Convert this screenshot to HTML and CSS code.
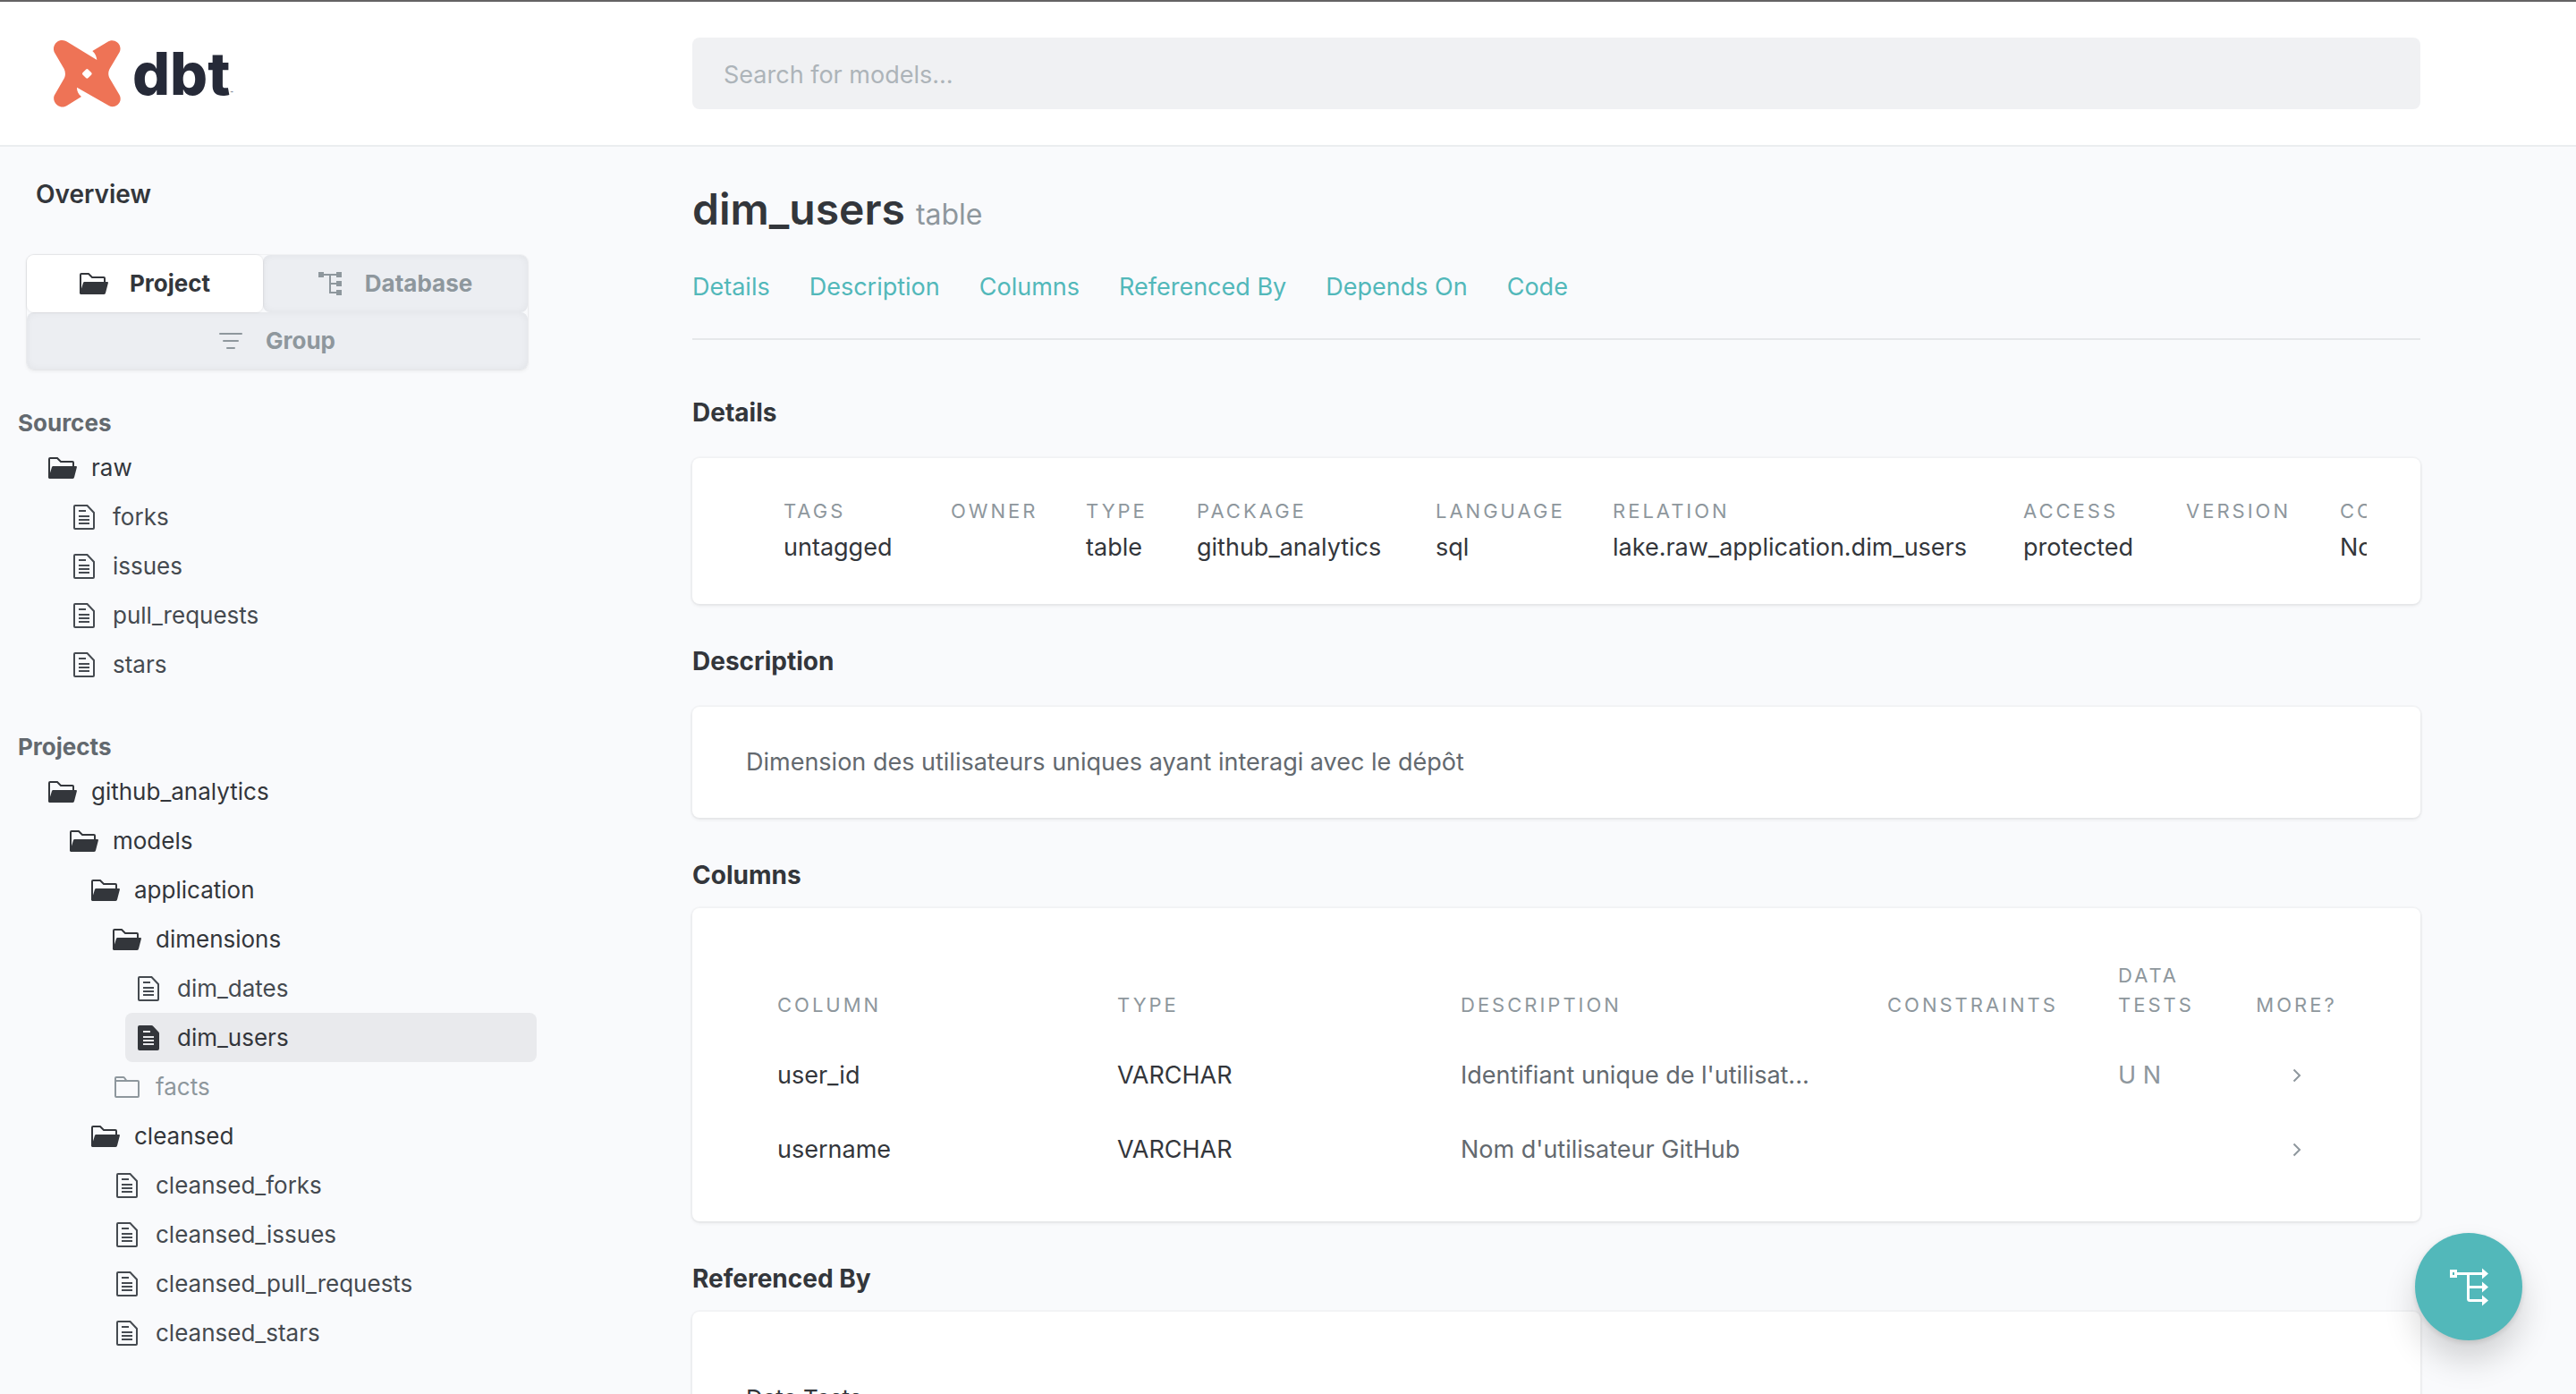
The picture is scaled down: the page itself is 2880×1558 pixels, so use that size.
FILE: index.html
```html
<!DOCTYPE html>
<html lang="en">
<head>
<meta charset="utf-8">
<title>dim_users - dbt Docs</title>
<meta name="viewport" content="width=device-width, initial-scale=1">
<link rel="stylesheet" href="styles.css">
</head>
<body>
<svg class="sprite" aria-hidden="true">
  <symbol id="folder-open" viewBox="0 0 32 24">
    <path d="M1 23V2q0-1 1-1h8l4 4h13q1 0 1 1v5" fill="none" stroke="currentColor" stroke-width="2"/>
    <path d="M5.500 10H31q1.200 0 .900 1.200L29 22.500Q28.500 24 27 24H1.500q-1.500 0-1-1.500L4 11q.400-1 1.500-1z" fill="currentColor"/>
  </symbol>
  <symbol id="folder-closed" viewBox="0 0 32 24">
    <path d="M3 22V2q0-1 1-1h8q.600 0 1 .500L15.500 5H28q1 0 1 1v16q0 1-1 1H4q-1 0-1-1zM3 5h13" fill="none" stroke="currentColor" stroke-width="2"/>
  </symbol>
  <symbol id="doc" viewBox="0 0 32 28">
    <path d="M5 26V2q0-1 1-1h13.500L27 9v17q0 1-1 1H6q-1 0-1-1z" fill="none" stroke="currentColor" stroke-width="2"/>
    <path d="M10 7h8M10 13h12M10 17h12M10 21h12" fill="none" stroke="currentColor" stroke-width="2"/>
  </symbol>
  <symbol id="doc-filled" viewBox="0 0 32 28">
    <path d="M4 26V2q0-2 2-2h13.500q.800 0 1.300.500L27.400 7.500q.600.600.600 1.500v17q0 2-2 2H6q-2 0-2-2z" fill="currentColor"/>
    <path d="M10 7h8M10 13h12M10 17h12M10 21h12" fill="none" stroke="#e9eaed" stroke-width="2"/>
  </symbol>
  <symbol id="tree" viewBox="0 0 26 26">
    <path d="M0 0h6v6H0zM20 0h6v6h-6zM20 10h6v6h-6zM20 20h6v6h-6z" fill="currentColor"/>
    <path d="M6 3h14M13 3v20h7M13 13h7" fill="none" stroke="currentColor" stroke-width="2"/>
  </symbol>
  <symbol id="filter" viewBox="0 0 26 18">
    <path d="M1 1h24M5 9h16M9 17h8" fill="none" stroke="currentColor" stroke-width="2" stroke-linecap="round"/>
  </symbol>
  <symbol id="chevron" viewBox="0 0 10 16">
    <path d="M1.500 1.500L8 8l-6.500 6.500" fill="none" stroke="currentColor" stroke-width="2"/>
  </symbol>
</svg>

<header class="topbar">
  <a class="logo" href="#" aria-label="dbt">
    <svg class="logo-mark" viewBox="60 44 225 225" aria-hidden="true">
      <path fill="#ee7356" fill-rule="evenodd" d="M88 44C96 44 104 48 108 51L205 110C204 100 200 88 190 80L240 50C250 43 264 43 273 51C284 60 286 73 281 84L249 138C242 150 242 162 249 174L281 228C287 240 284 253 274 261C265 268 254 268 246 264L138 202C138 214 142 224 153 233L106 262C96 269 83 269 73 262C61 254 58 240 62 229L95 172C100 163 100 150 95 140L62 84C57 71 61 58 71 50C76 46 82 44 88 44ZM168 142L158 152Q154 156 158 160L168 170Q172 174 176 170L186 160Q190 156 186 152L176 142Q172 138 168 142Z"/>
    </svg>
    <span class="logo-text">dbt</span>
  </a>
  <form class="search">
    <input class="search-input" type="search" aria-label="Search for models" placeholder="Search for models...">
  </form>
</header>

<div class="layout">
  <nav class="sidebar" aria-label="Project navigation">
    <a class="overview" href="#">Overview</a>
    <div class="switch">
      <button class="switch-btn is-active" type="button"><svg class="icon-folder"><use href="#folder-open"/></svg>Project</button>
      <button class="switch-btn" type="button"><svg class="icon-tree"><use href="#tree"/></svg>Database</button>
      <button class="switch-btn is-wide" type="button"><svg class="icon-filter"><use href="#filter"/></svg>Group</button>
    </div>

    <h2 class="tree-title">Sources</h2>
    <ul class="tree">
      <li><a class="node is-folder" href="#"><svg class="icon-folder"><use href="#folder-open"/></svg>raw</a>
        <ul>
          <li><a class="node" href="#"><svg class="icon-doc"><use href="#doc"/></svg>forks</a></li>
          <li><a class="node" href="#"><svg class="icon-doc"><use href="#doc"/></svg>issues</a></li>
          <li><a class="node" href="#"><svg class="icon-doc"><use href="#doc"/></svg>pull_requests</a></li>
          <li><a class="node" href="#"><svg class="icon-doc"><use href="#doc"/></svg>stars</a></li>
        </ul>
      </li>
    </ul>

    <h2 class="tree-title">Projects</h2>
    <ul class="tree">
      <li><a class="node is-folder" href="#"><svg class="icon-folder"><use href="#folder-open"/></svg>github_analytics</a>
        <ul>
          <li><a class="node is-folder" href="#"><svg class="icon-folder"><use href="#folder-open"/></svg>models</a>
            <ul>
              <li><a class="node is-folder" href="#"><svg class="icon-folder"><use href="#folder-open"/></svg>application</a>
                <ul>
                  <li><a class="node is-folder" href="#"><svg class="icon-folder"><use href="#folder-open"/></svg>dimensions</a>
                    <ul>
                      <li><a class="node" href="#"><svg class="icon-doc"><use href="#doc"/></svg>dim_dates</a></li>
                      <li><a class="node is-selected" href="#"><svg class="icon-doc"><use href="#doc-filled"/></svg>dim_users</a></li>
                    </ul>
                  </li>
                  <li><a class="node is-closed" href="#"><svg class="icon-folder"><use href="#folder-closed"/></svg>facts</a></li>
                </ul>
              </li>
              <li><a class="node is-folder" href="#"><svg class="icon-folder"><use href="#folder-open"/></svg>cleansed</a>
                <ul>
                  <li><a class="node" href="#"><svg class="icon-doc"><use href="#doc"/></svg>cleansed_forks</a></li>
                  <li><a class="node" href="#"><svg class="icon-doc"><use href="#doc"/></svg>cleansed_issues</a></li>
                  <li><a class="node" href="#"><svg class="icon-doc"><use href="#doc"/></svg>cleansed_pull_requests</a></li>
                  <li><a class="node" href="#"><svg class="icon-doc"><use href="#doc"/></svg>cleansed_stars</a></li>
                </ul>
              </li>
            </ul>
          </li>
        </ul>
      </li>
    </ul>
  </nav>

  <main class="content">
    <h1 class="title">dim_users <small class="title-kind">table</small></h1>
    <nav class="anchors" aria-label="Sections">
      <a href="#details">Details</a>
      <a href="#description">Description</a>
      <a href="#columns">Columns</a>
      <a href="#referenced">Referenced By</a>
      <a href="#depends">Depends On</a>
      <a href="#code">Code</a>
    </nav>

    <section class="section is-first" id="details">
      <h2 class="section-title">Details</h2>
      <div class="card details-card">
        <dl class="details">
          <div><dt>Tags</dt><dd>untagged</dd></div>
          <div><dt>Owner</dt><dd></dd></div>
          <div><dt>Type</dt><dd>table</dd></div>
          <div><dt>Package</dt><dd>github_analytics</dd></div>
          <div><dt>Language</dt><dd>sql</dd></div>
          <div><dt>Relation</dt><dd>lake.raw_application.dim_users</dd></div>
          <div><dt>Access</dt><dd>protected</dd></div>
          <div><dt>Version</dt><dd></dd></div>
          <div><dt>Contract</dt><dd>Not Enforced</dd></div>
        </dl>
      </div>
    </section>

    <section class="section" id="description">
      <h2 class="section-title">Description</h2>
      <div class="card description-card">
        <p class="description">Dimension des utilisateurs uniques ayant interagi avec le dépôt</p>
      </div>
    </section>

    <section class="section is-tight" id="columns">
      <h2 class="section-title">Columns</h2>
      <div class="card columns-card">
        <table class="columns">
          <colgroup>
            <col class="col-name"><col class="col-type"><col class="col-desc"><col class="col-constraints"><col class="col-tests"><col>
          </colgroup>
          <thead>
            <tr><th>Column</th><th>Type</th><th>Description</th><th>Constraints</th><th>Data<br>Tests</th><th class="more">More?</th></tr>
          </thead>
          <tbody>
            <tr><td>user_id</td><td>VARCHAR</td><td class="desc">Identifiant unique de l'utilisat...</td><td></td><td class="tests">U N</td><td class="more"><button class="expand" type="button" aria-label="Expand user_id"><svg class="icon-chevron"><use href="#chevron"/></svg></button></td></tr>
            <tr><td>username</td><td>VARCHAR</td><td class="desc">Nom d'utilisateur GitHub</td><td></td><td class="tests"></td><td class="more"><button class="expand" type="button" aria-label="Expand username"><svg class="icon-chevron"><use href="#chevron"/></svg></button></td></tr>
          </tbody>
        </table>
      </div>
    </section>

    <section class="section is-tight" id="referenced">
      <h2 class="section-title">Referenced By</h2>
      <div class="card referenced-card">
        <a class="ref-tab" href="#">Data Tests</a>
      </div>
    </section>
  </main>
</div>

<button class="graph-btn" type="button" aria-label="View lineage graph">
  <svg class="icon-graph" viewBox="0 0 44 44" aria-hidden="true">
    <path d="M2.500 4.500h5v6h-5z" fill="none" stroke="#fff" stroke-width="3"/>
    <path d="M9 7.500h29M21.500 7.500v28q0 2 2 2H38M21.500 22.500H38" fill="none" stroke="#fff" stroke-width="3"/>
    <path d="M37 1.500l7 6-7 6zM37 16.500l7 6-7 6zM37 31.500l7 6-7 6z" fill="#fff"/>
  </svg>
</button>
</body>
</html>
```

FILE: styles.css
```css
:root {
  --ink: #33363b;
  --ink-soft: #454a50;
  --muted: #63696f;
  --faint: #8e979d;
  --teal: #52b8ba;
  --line: #e6e8ea;
  --page: #f9fafc;
}

* {
  box-sizing: border-box;
}

body {
  margin: 0;
  height: 100vh;
  display: flex;
  flex-direction: column;
  overflow: hidden;
  background: var(--page);
  color: var(--ink);
  font-family: Inter, "Liberation Sans", sans-serif;
  font-size: 27px;
  line-height: 40px;
}

a {
  color: inherit;
  text-decoration: none;
}

button {
  font: inherit;
  border: 0;
  cursor: pointer;
}

ul,
dl,
dd,
h1,
h2,
p {
  margin: 0;
  padding: 0;
}

ul {
  list-style: none;
}

.sprite {
  display: none;
}

.icon-folder {
  width: 32px;
  height: 24px;
}

.icon-doc {
  width: 32px;
  height: 28px;
}

.icon-tree {
  width: 26px;
  height: 26px;
}

.icon-filter {
  width: 26px;
  height: 18px;
}

/* Top bar */

.topbar {
  display: grid;
  grid-template-columns: 774px 1fr;
  align-items: center;
  padding: 40px 174px 40px 0;
  background: #fff;
  border-top: 2px solid #656364;
  border-bottom: 2px solid #ebedef;
}

.logo {
  display: flex;
  align-items: center;
  gap: 13px;
  padding-left: 60px;
}

.logo-mark {
  width: 75px;
  height: 75px;
}

.logo-text {
  display: flex;
  align-items: baseline;
  color: #262a38;
  font-size: 66px;
  font-weight: 800;
  line-height: 76px;
}

.logo-text::after {
  content: "™";
  font-size: 5px;
  font-weight: 400;
  line-height: 6px;
}

.search-input {
  display: block;
  width: 100%;
  height: 80px;
  padding: 2px 35px 0;
  border: 0;
  border-radius: 8px;
  background: #f0f1f3;
  color: var(--ink);
  font: inherit;
}

.search-input::placeholder {
  color: #adb4b9;
  opacity: 1;
}

/* Page body */

.layout {
  flex: 1;
  min-height: 0;
  display: grid;
  grid-template-columns: 600px 1fr;
}

.sidebar,
.content {
  min-width: 0;
  overflow: hidden;
}

/* Sidebar */

.sidebar {
  padding-top: 33px;
}

.overview {
  display: block;
  padding-left: 40px;
  font-size: 28px;
  font-weight: 600;
}

.switch {
  display: grid;
  grid-template-columns: 264fr 296fr;
  margin: 48px 10px 0 30px;
  border-radius: 8px;
  box-shadow: 0 0 0 1px rgba(0, 0, 0, .03), 0 2px 4px rgba(0, 0, 0, .06);
}

.switch-btn {
  display: flex;
  align-items: center;
  justify-content: center;
  gap: 26px;
  height: 64px;
  padding: 0;
  border-radius: 8px;
  background: #eceef2;
  box-shadow: inset 0 0 8px rgba(0, 0, 0, .05);
  color: var(--faint);
  font-size: 26px;
  font-weight: 700;
}

.switch-btn.is-active {
  gap: 24px;
  background: #fff;
  color: var(--ink);
  box-shadow: 0 0 2px 1px rgba(0, 0, 0, .06);
  z-index: 1;
}

.switch-btn.is-wide {
  grid-column: span 2;
}

.tree-title {
  margin: 40px 0 2px;
  padding-left: 20px;
  color: var(--muted);
  font-size: 26px;
  font-weight: 700;
}

.tree + .tree-title {
  margin-top: 45px;
}

.tree {
  padding-left: 44px;
}

.tree ul {
  padding-left: 24px;
}

.node {
  display: flex;
  align-items: center;
  gap: 16px;
  height: 55px;
  padding-left: 10px;
  border-radius: 8px;
  color: var(--ink-soft);
  font-size: 26px;
}

.node.is-folder {
  color: var(--ink);
}

.node.is-selected {
  background: #e9eaed;
  color: var(--ink);
}

.node.is-closed {
  color: var(--faint);
}

/* Content */

.content {
  padding: 40px 174px 0;
}

.title {
  font-size: 48px;
  font-weight: 600;
  line-height: 60px;
}

.title-kind {
  color: var(--faint);
  font-size: 32px;
  font-weight: 400;
  line-height: 32px;
}

.anchors {
  display: flex;
  gap: 44px;
  margin-top: 37px;
  padding-bottom: 37px;
  border-bottom: 2px solid var(--line);
  color: var(--teal);
}

.section {
  margin-top: 44px;
}

.section.is-first {
  margin-top: 61px;
}

.section-title {
  margin-bottom: 31px;
  font-size: 28px;
  font-weight: 700;
}

.is-tight .section-title {
  margin-bottom: 17px;
}

.card {
  padding: 43px 60px;
  border-radius: 8px;
  background: #fff;
  box-shadow: 0 0 0 2px rgba(0, 0, 0, .025), 0 2px 4px rgba(0, 0, 0, .07);
}

.details {
  display: grid;
  grid-template-columns: 187px 151px 124px 267px 198px 459px 182px 172px max-content;
  padding-left: 42px;
  overflow: hidden;
}

.details dt,
.columns th {
  color: var(--faint);
  font-size: 22px;
  font-weight: 400;
  letter-spacing: 3px;
  text-transform: uppercase;
}

.details dt {
  margin-bottom: 5px;
  line-height: 32px;
}

.details dd {
  min-height: 40px;
}

.description-card {
  padding-block: 42px;
}

.description,
.columns .desc {
  color: var(--muted);
}

.columns-card {
  padding: 59px 84px 39px 95px;
}

.columns {
  width: 100%;
  table-layout: fixed;
  border-collapse: collapse;
}

.columns th,
.columns td {
  padding: 0;
  text-align: left;
}

.columns th {
  padding-bottom: 20px;
  line-height: 33px;
  vertical-align: bottom;
}

.columns td {
  height: 83px;
  vertical-align: middle;
}

.columns th.more,
.columns td.more {
  text-align: center;
}

.columns .tests {
  color: var(--faint);
}

.col-name {
  width: 380px;
}

.col-type {
  width: 384px;
}

.col-desc {
  width: 477px;
}

.col-constraints {
  width: 258px;
}

.col-tests {
  width: 145px;
}

.expand {
  display: block;
  margin: 0 auto;
  padding: 12px;
  background: none;
  color: var(--faint);
}

.icon-chevron {
  display: block;
  width: 10px;
  height: 16px;
}

.referenced-card {
  height: 400px;
  padding-top: 77px;
}

.ref-tab {
  font-size: 26px;
}

/* Floating graph button */

.graph-btn {
  position: fixed;
  right: 60px;
  bottom: 60px;
  display: grid;
  place-items: center;
  width: 120px;
  height: 120px;
  padding: 0;
  border-radius: 50%;
  background: var(--teal);
  box-shadow: 0 2px 6px rgba(0, 0, 0, .12), 0 22px 36px rgba(0, 0, 0, .16);
}

.icon-graph {
  width: 44px;
  height: 44px;
}
```
